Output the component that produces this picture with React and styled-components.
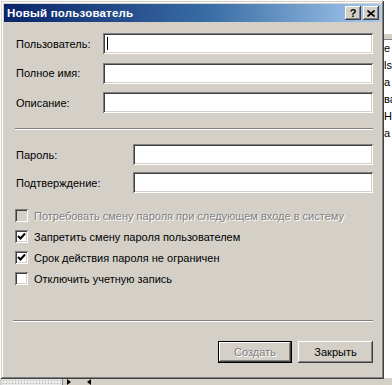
import React from "react";
import styled, { createGlobalStyle } from "styled-components";

const Global = createGlobalStyle`
  html, body {
    margin: 0;
    padding: 0;
    background: #ffffff;
    overflow: hidden;
  }
  body {
    font-family: "Liberation Sans", Arial, sans-serif;
    font-size: 11px;
    color: #000;
  }
`;

const Desktop = styled.div`
  position: relative;
  width: 392px;
  height: 385px;
  background: #fbfbfb;
  overflow: hidden;
`;

const BackStrip = styled.div`
  position: absolute;
  top: 0;
  right: 0;
  width: 9px;
  height: 378px;
  display: flex;
  flex-direction: column;
  background: #ffffff;
  border-left: 1px solid #c8c8c8;
  overflow: hidden;
`;

const BackHeader = styled.div`
  margin-top: 34px;
  height: 5px;
  background: #d4d0c8;
  border-bottom: 1px solid #808080;
`;

const BackText = styled.div`
  height: 17px;
  line-height: 17px;
  padding-left: 1px;
  white-space: nowrap;
  font-size: 11px;
  overflow: hidden;
`;

const BackBar = styled.div`
  position: absolute;
  left: 0;
  right: 0;
  bottom: 0;
  height: 7px;
  display: flex;
  align-items: center;
  gap: 4px;
  background: #d4d0c8;
  border-top: 1px solid #ffffff;
`;

const Dotted = styled.div`
  width: 60px;
  height: 6px;
  margin-left: 2px;
  background-image: radial-gradient(#b0b0b0 0.6px, transparent 0.7px);
  background-size: 3px 3px;
  background-color: #e8e8e8;
  border-right: 1px solid #808080;
`;

const Arrow = styled.div`
  width: 0;
  height: 0;
  border-top: 3px solid transparent;
  border-bottom: 3px solid transparent;
  ${(p) => (p.$left ? "border-right: 4px solid #000;" : "border-left: 4px solid #000;")}
  margin-right: 12px;
`;

const Dialog = styled.div`
  position: absolute;
  left: 1px;
  top: 1px;
  width: 383px;
  height: 378px;
  box-sizing: border-box;
  padding: 3px;
  background: #d4d0c8;
  box-shadow: inset -1px -1px #404040, inset 1px 1px #d4d0c8,
    inset -2px -2px #808080, inset 2px 2px #ffffff;
  display: flex;
  flex-direction: column;
`;

const TitleBar = styled.div`
  height: 18px;
  display: flex;
  align-items: center;
  padding: 0 2px 0 3px;
  background: linear-gradient(to right, #0a246a, #3a6ea5 55%, #a6caf0);
`;

const Title = styled.div`
  flex: 1;
  color: #ffffff;
  font-weight: bold;
  font-size: 11.5px;
  letter-spacing: 0.2px;
`;

const TitleButton = styled.div`
  width: 16px;
  height: 14px;
  margin-left: ${(p) => p.$gap || 0}px;
  box-sizing: border-box;
  background: #d4d0c8;
  box-shadow: inset -1px -1px #404040, inset 1px 1px #ffffff,
    inset -2px -2px #808080;
  display: flex;
  align-items: center;
  justify-content: center;
  font-weight: bold;
  font-size: 11px;
  line-height: 1;
  color: #000;
`;

const Body = styled.div`
  flex: 1;
  display: flex;
  flex-direction: column;
  padding: 11px 8px 0 12px;
`;

const FieldGrid = styled.div`
  display: grid;
  grid-template-columns: ${(p) => p.$label}px 1fr;
  row-gap: ${(p) => p.$gap}px;
  align-items: center;
`;

const Label = styled.div`
  white-space: nowrap;
`;

const Input = styled.div`
  height: 21px;
  box-sizing: border-box;
  background: #ffffff;
  box-shadow: inset 1px 1px #808080, inset -1px -1px #ffffff,
    inset 2px 2px #404040, inset -2px -2px #d4d0c8;
  position: relative;
`;

const Caret = styled.div`
  position: absolute;
  left: 4px;
  top: 4px;
  width: 1px;
  height: 13px;
  background: #000;
`;

const Separator = styled.div`
  margin: ${(p) => p.$top}px ${(p) => p.$right || 0}px ${(p) => p.$bottom}px
    ${(p) => p.$left || 0}px;
  border-top: 1px solid #808080;
  border-bottom: 1px solid #ffffff;
  height: 0;
`;

const Checks = styled.div`
  display: flex;
  flex-direction: column;
  margin-top: 12px;
`;

const CheckRow = styled.div`
  height: 21px;
  display: flex;
  align-items: center;
  gap: 6px;
  color: ${(p) => (p.$disabled ? "#808080" : "#000")};
  text-shadow: ${(p) => (p.$disabled ? "1px 1px #ffffff" : "none")};
`;

const Box = styled.div`
  width: 13px;
  height: 13px;
  box-sizing: border-box;
  background: ${(p) => (p.$disabled ? "#d4d0c8" : "#ffffff")};
  box-shadow: inset 1px 1px #808080, inset -1px -1px #ffffff,
    inset 2px 2px #404040, inset -2px -2px #d4d0c8;
  display: flex;
  align-items: center;
  justify-content: center;
  margin-left: -1px;
`;

const Buttons = styled.div`
  display: flex;
  justify-content: flex-end;
  gap: 6px;
`;

const Button = styled.div`
  width: ${(p) => p.$w}px;
  height: 22px;
  box-sizing: border-box;
  display: flex;
  align-items: center;
  justify-content: center;
  background: #d4d0c8;
  color: ${(p) => (p.$disabled ? "#808080" : "#000")};
  text-shadow: ${(p) => (p.$disabled ? "1px 1px #ffffff" : "none")};
  box-shadow: ${(p) =>
    p.$default
      ? "inset 0 0 0 1px #000, inset -2px -2px #404040, inset 2px 2px #ffffff, inset -3px -3px #808080"
      : "inset -1px -1px #404040, inset 1px 1px #ffffff, inset -2px -2px #808080"};
`;

function Check({ checked }) {
  if (!checked) return null;
  return (
    <svg width="9" height="9" viewBox="0 0 9 9">
      <path d="M1 4 L3.5 6.5 L8 1.5" fill="none" stroke="#000" strokeWidth="2" />
    </svg>
  );
}

const checks = [
  { text: "Потребовать смену пароля при следующем входе в систему", disabled: true },
  { text: "Запретить смену пароля пользователем", checked: true },
  { text: "Срок действия пароля не ограничен", checked: true },
  { text: "Отключить учетную запись" },
];

export default function App() {
  return (
    <Desktop>
      <Global />
      <BackStrip>
        <BackHeader />
        <BackText>е</BackText>
        <BackText>ls</BackText>
        <BackText>а</BackText>
        <BackText>ва</BackText>
        <BackText>На</BackText>
        <BackText>а</BackText>
      </BackStrip>
      <BackBar>
        <Dotted />
        <Arrow />
        <Arrow $left />
      </BackBar>
      <Dialog>
        <TitleBar>
          <Title>Новый пользователь</Title>
          <TitleButton>?</TitleButton>
          <TitleButton $gap={2}>
            <svg width="8" height="7" viewBox="0 0 8 7">
              <path d="M0.5 0.5 L7.5 6.5 M7.5 0.5 L0.5 6.5" stroke="#000" strokeWidth="1.6" />
            </svg>
          </TitleButton>
        </TitleBar>
        <Body>
          <FieldGrid $label={87} $gap={8.5}>
            <Label>Пользователь:</Label>
            <Input>
              <Caret />
            </Input>
            <Label>Полное имя:</Label>
            <Input />
            <Label>Описание:</Label>
            <Input />
          </FieldGrid>
          <Separator $top={15} $bottom={14} $left={-1} />
          <FieldGrid $label={117} $gap={7}>
            <Label>Пароль:</Label>
            <Input />
            <Label>Подтверждение:</Label>
            <Input />
          </FieldGrid>
          <Checks>
            {checks.map((c) => (
              <CheckRow key={c.text} $disabled={c.disabled}>
                <Box $disabled={c.disabled}>
                  <Check checked={c.checked} />
                </Box>
                {c.text}
              </CheckRow>
            ))}
          </Checks>
          <Separator $top={31} $bottom={19} $left={-3} />
          <Buttons>
            <Button $w={74} $default $disabled>
              Создать
            </Button>
            <Button $w={75}>Закрыть</Button>
          </Buttons>
        </Body>
      </Dialog>
    </Desktop>
  );
}
